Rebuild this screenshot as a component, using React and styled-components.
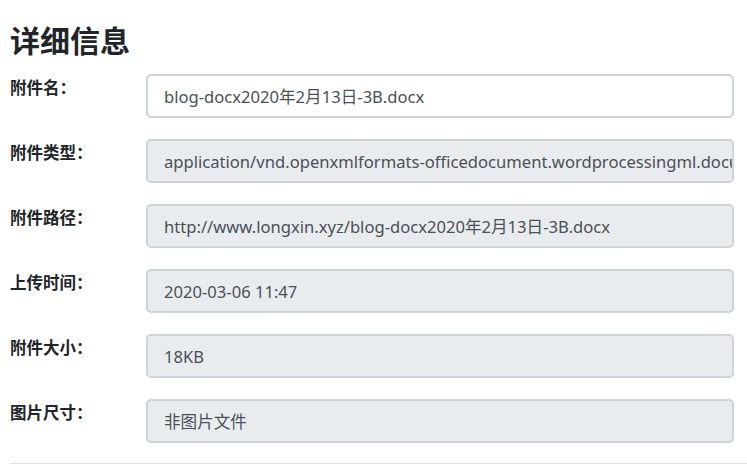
import React from "react";
import styled, { createGlobalStyle } from "styled-components";

const Global = createGlobalStyle`
  html, body { margin: 0; padding: 0; background: #fff; }
  body { font-family: "Noto Sans", "Noto Sans CJK SC", sans-serif; color: #212529; }
`;

const Page = styled.div`
  padding: 19px 13px 0 10px;
  width: 747px;
  box-sizing: border-box;
`;

const Title = styled.h3`
  margin: 0 0 15px;
  font-family: "Noto Sans CJK SC", sans-serif;
  font-size: 30px;
  line-height: 40px;
  font-weight: 700;
  color: #212529;
`;

const Form = styled.div`
  display: flex;
  flex-direction: column;
  gap: 21px;
`;

const Row = styled.div`
  display: grid;
  grid-template-columns: 136px 1fr;
  align-items: start;
`;

const Label = styled.label`
  font-family: "Noto Sans CJK SC", sans-serif;
  font-weight: 700;
  font-size: 16.5px;
  line-height: 24px;
  padding-top: 1px;
  color: #212529;
`;

const Field = styled.div`
  height: 44px;
  box-sizing: border-box;
  border: 2px solid #ced4da;
  border-radius: 5px;
  background: ${(p) => (p.$editable ? "#fff" : "#e9ecef")};
  padding: 0 16px;
  display: flex;
  align-items: center;
  overflow: hidden;
  white-space: nowrap;
  font-family: "Noto Sans", "Noto Sans CJK SC", sans-serif;
  font-size: 16.6px;
  color: #495057;
`;

const Divider = styled.hr`
  margin: 20px -13px 0 0;
  border: 0;
  border-top: 1px solid #dee2e6;
`;

const rows = [
  ["附件名：", "blog-docx2020年2月13日-3B.docx", true],
  ["附件类型：", "application/vnd.openxmlformats-officedocument.wordprocessingml.document"],
  ["附件路径：", "http://www.longxin.xyz/blog-docx2020年2月13日-3B.docx"],
  ["上传时间：", "2020-03-06 11:47"],
  ["附件大小：", "18KB"],
  ["图片尺寸：", "非图片文件"],
];

export default function App() {
  return (
    <Page>
      <Global />
      <Title>详细信息</Title>
      <Form>
        {rows.map(([l, v, e]) => (
          <Row key={l}>
            <Label>{l}</Label>
            <Field $editable={e}>{v}</Field>
          </Row>
        ))}
      </Form>
      <Divider />
    </Page>
  );
}
